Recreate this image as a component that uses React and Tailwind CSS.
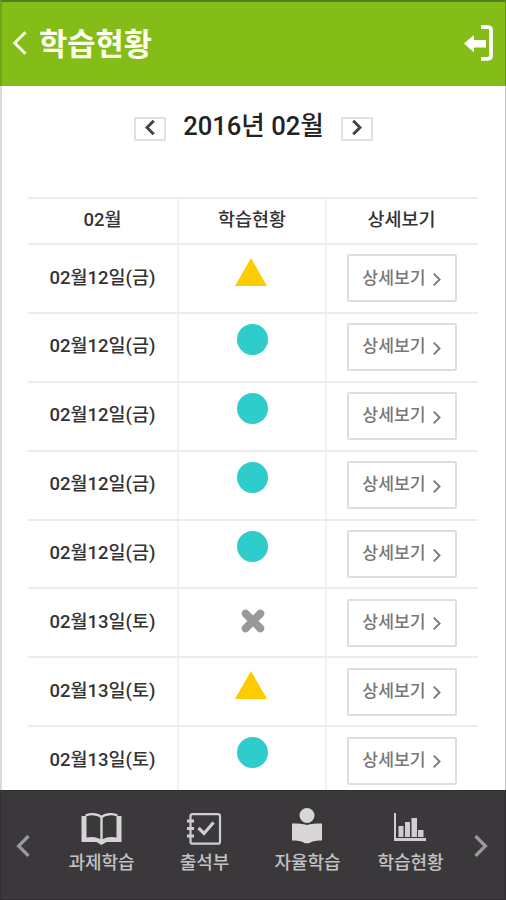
const rows = [
  { date: '02월12일(금)', status: 'triangle' },
  { date: '02월12일(금)', status: 'circle' },
  { date: '02월12일(금)', status: 'circle' },
  { date: '02월12일(금)', status: 'circle' },
  { date: '02월12일(금)', status: 'circle' },
  { date: '02월13일(토)', status: 'cross' },
  { date: '02월13일(토)', status: 'triangle' },
  { date: '02월13일(토)', status: 'circle' },
];

function Chevron({ left, className, width = 2 }) {
  return (
    <svg viewBox="0 0 12 20" className={className} fill="none" stroke="currentColor" strokeWidth={width}>
      <path d={left ? 'M11 1 2 10l9 9' : 'M1 1l9 9-9 9'} />
    </svg>
  );
}

function Status({ type }) {
  if (type === 'circle') {
    return <span className="mb-[16px] ml-[1px] size-[31px] rounded-full bg-[#2ecdcb]" />;
  }
  if (type === 'triangle') {
    return (
      <svg viewBox="0 0 32 28" className="mb-[13px] mr-[3px] h-[28px] w-[32px]">
        <path d="M16 0 32 28H0z" fill="#fccb00" />
      </svg>
    );
  }
  return (
    <svg viewBox="0 0 24 24" className="mb-[4px] ml-[1px] size-[24px]">
      <path d="M4 4l16 16M20 4 4 20" stroke="#999" strokeWidth="7.500" />
      <path d="M4.500 4.500l15 15M19.500 4.500l-15 15" stroke="#999" strokeWidth="7.500" strokeLinecap="round" />
    </svg>
  );
}

function BookIcon() {
  return (
    <svg viewBox="0 0 40 32" className="h-[32px] w-[41px]" fill="none" stroke="#d5d3d5">
      <path d="M0 3h5v23h11l4 2 4-2h11V3h5v26H25l-5 3-5-3H0z" fill="#d5d3d5" stroke="none" />
      <path d="M4 2.500C9 .5 16 .5 20 4c4-3.500 11-3.500 16-1.500M4 26c6-1.500 12-1 16 2.500 4-3.500 10-4 16-2.500M20 4v25" strokeWidth="2.400" />
    </svg>
  );
}

function NoteIcon() {
  return (
    <svg viewBox="0 0 36 32" className="mr-[1px] h-[32px] w-[36px]" fill="none" stroke="#cfcdcf">
      <rect x="4.500" y="1.200" width="29.500" height="29.500" rx="2" strokeWidth="2.200" />
      <path d="M1 8h7M1 15.500h7M1 23h7" strokeWidth="2.800" />
      <path d="m12.500 15 5.500 5.500 9.500-11" strokeWidth="3.200" />
    </svg>
  );
}

function ReaderIcon() {
  return (
    <svg viewBox="0 0 32 36" className="mb-[1px] mr-[1px] h-[36px] w-[32px]" fill="#d8d6d7">
      <circle cx="16" cy="7.500" r="7.500" />
      <path d="M1 15.500c6 0 11 .2 15 1.500 4-1.300 9-1.500 15-1.500v17c-5 0-9 .3-12 2.200-2 .8-4 .8-6 0C10 32.800 6 32.500 1 32.500z" />
    </svg>
  );
}

function ChartIcon() {
  return (
    <svg viewBox="0 0 34 30" className="mb-[3px] mr-[2px] h-[30px] w-[34px]" fill="#cfcdcf">
      <path d="M1 1h2v25h30v3H1zM5.500 14h5v11h-5zM12 10h5v15h-5zM18.500 6h5.500v19h-5.500zM25 18h5.500v7H25z" />
    </svg>
  );
}

const menu = [
  { label: '과제학습', icon: BookIcon },
  { label: '출석부', icon: NoteIcon },
  { label: '자율학습', icon: ReaderIcon },
  { label: '학습현황', icon: ChartIcon },
];

export default function App() {
  return (
    <div className="flex h-[900px] w-[506px] flex-col overflow-hidden bg-white font-['Roboto','Noto_Sans_CJK_KR',sans-serif] text-[#333]">
      {/* Header */}
      <header className="flex h-[86px] shrink-0 items-center border-t-2 border-r border-l-2 border-t-[#4f7f20] border-r-[#629114] border-l-[#6fa51c] bg-[#84bd18] pr-[12px] pl-[10px] text-[#fcffee]">
        <Chevron left className="mb-[2px] h-[24px] w-[15px]" width={2.4} />
        <h1 className="mt-[2px] ml-[12px] text-[30.700px] leading-[36px] font-bold">학습현황</h1>
        <svg viewBox="0 0 29 36" className="mb-[2px] ml-auto h-[36px] w-[29px]">
          <path d="M0 18.500 10 10v5h12v7.500H10v5z" fill="#fff" />
          <path d="M17 2.200h7q3 0 3 3v25.600q0 3-3 3h-7" fill="none" stroke="#fff" strokeWidth="3.800" />
        </svg>
      </header>

      <main className="flex min-h-0 flex-1 flex-col overflow-hidden border-r border-l-2 border-r-[#c4c4c4] border-l-[#dadada]">
        {/* Month picker */}
        <div className="flex h-[111px] shrink-0 items-start pt-[28px] pl-[132px]">
          <button className="mt-[3px] flex h-[24px] w-[32px] items-center justify-center rounded-xs border-2 border-[#e0e0e0]">
            <Chevron left className="mb-[4px] h-[15px] w-[10px] text-[#444]" width={4} />
          </button>
          <h2 className="w-[175px] text-center text-[25.600px] leading-[24px] font-medium whitespace-nowrap text-[#222]">2016년 02월</h2>
          <button className="mt-[3px] flex h-[24px] w-[32px] items-center justify-center rounded-xs border-2 border-[#e0e0e0]">
            <Chevron className="mb-[4px] h-[15px] w-[10px] text-[#444]" width={4} />
          </button>
        </div>

        {/* Table */}
        <div className="ml-[26px] w-[450px] shrink-0 border-t-2 border-[#ececec] text-[18.500px] font-medium">
          <div className="grid h-[46px] grid-cols-[151px_148px_151px] border-b-2 border-[#ececec] text-center leading-[43px]">
            <div className="border-r-2 border-[#f0f0f0]">02월</div>
            <div className="border-r-2 border-[#f0f0f0]">학습현황</div>
            <div className="pr-[2px]">상세보기</div>
          </div>
          {rows.map((row, i) => (
            <div key={i} className="grid h-[68.900px] grid-cols-[151px_148px_151px] border-b-2 border-[#ececec]">
              <div className="flex items-center justify-center border-r-2 border-[#f0f0f0]">{row.date}</div>
              <div className="flex items-center justify-center border-r-2 border-[#f0f0f0]">
                <Status type={row.status} />
              </div>
              <div className="flex items-center justify-center pr-[2px]">
                <button className="flex h-[48px] w-[110px] items-center justify-center gap-[7px] rounded-xs border-2 border-[#dedede] text-[17.200px] font-medium text-[#777]">
                  상세보기
                  <Chevron className="mt-[2px] h-[13px] w-[8px]" width={2.8} />
                </button>
              </div>
            </div>
          ))}
        </div>
      </main>

      {/* Bottom menu */}
      <nav className="flex h-[110px] shrink-0 items-start border border-[#302e31] bg-[#3a383b] text-[#c4c2c4]">
        <Chevron left className="mt-[44px] ml-[15px] h-[22px] w-[14px] shrink-0 text-[#9b999b]" width={3} />
        <div className="ml-[20px] grid grid-cols-4">
          {menu.map(({ label, icon: Icon }) => (
            <div key={label} className="flex w-[103px] flex-col items-center">
              <span className="flex h-[56px] items-end pb-[2px]">
                <Icon />
              </span>
              <span className="mt-[2px] text-[18px] leading-[28px] font-medium">{label}</span>
            </div>
          ))}
        </div>
        <Chevron className="mt-[44px] ml-[12px] h-[22px] w-[14px] shrink-0 text-[#9b999b]" width={3} />
      </nav>
    </div>
  );
}
